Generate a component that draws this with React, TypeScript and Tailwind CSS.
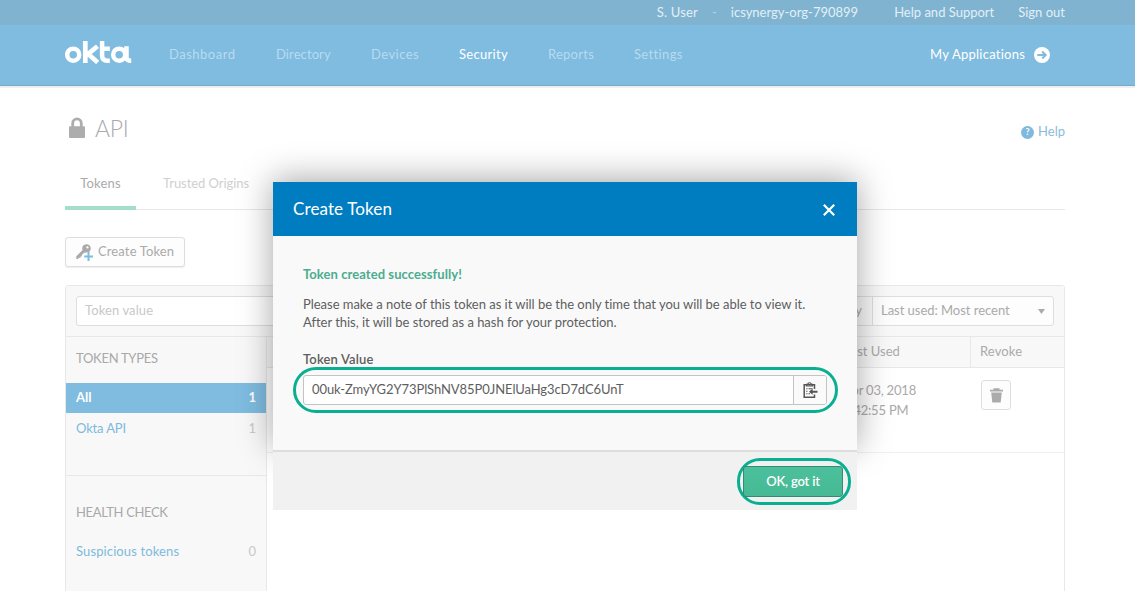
import React from "react";

const OktaLogo = () => (
  <svg className="mt-[16px] h-[23px] w-[67px] shrink-0" viewBox="0 0 67 23" fill="none" stroke="#fff" strokeWidth="4.500">
    <circle cx="8.200" cy="13.700" r="6" />
    <path d="M20.300 0v22M32.500 5.300L22.600 13.400M22.300 12.200l10.400 9.200" strokeWidth="4.700" />
    <path d="M37.100 0v14.400c0 3.600 1.800 5.300 5.500 5.300h2.200M37.300 7.700h7.500" />
    <circle cx="54.200" cy="13.700" r="6" />
    <path d="M61.500 5.300v10.900c0 2.400 1.200 3.500 4.700 3.500" />
  </svg>
);

const LockIcon = () => (
  <svg className="h-[21px] w-[16px]" viewBox="0 0 16 21">
    <path d="M3.700 11V6.200a4.300 4.300 0 0 1 8.600 0V11" fill="none" stroke="#adadad" strokeWidth="2.800" />
    <rect y="9.300" width="16" height="11.700" rx="1" fill="#adadad" />
  </svg>
);

const KeyIcon = () => (
  <svg className="h-[17px] w-[18px]" viewBox="0 0 18 17">
    <path fillRule="evenodd" d="M6.400 3.200C7.200.8 9.400 0 11.300.3c2.100.3 3.500 2.100 3.500 4.100 0 2.500-2 4.500-4.400 4.400-.8 0-1.300-.1-1.900-.4L5.800 10.900l.1 1.300-1.300.2-.2 1.300-1.500.1-.9 1.100H.3v-2.600l6.300-6.200c-.4-1-.5-2-.2-2.900zM11.400 2.200a1.200 1.200 0 1 0 .1 2.400 1.200 1.200 0 0 0-.1-2.400z" fill="#a9a9a9" />
    <path d="M12.500 8v9M8 12.500h9" stroke="#fdfdfd" strokeWidth="4" />
    <path d="M12.500 8v9M8.200 12.500h8.800" stroke="#7fbddf" strokeWidth="2" />
  </svg>
);

const ClipboardIcon = () => (
  <svg className="h-[17px] w-[15px]" viewBox="0 0 15 17" fill="none" stroke="#555" strokeWidth="1.500">
    <path d="M11.500 7V2.800H1.200v12.400h10.300v-2.700" />
    <path d="M3.500 4h6V2.300H8.200C8.200.2 4.800.2 4.800 2.300H3.500z" strokeWidth="1.200" />
    <path d="M3.200 6.700h1.300M5.500 6.700h4M3.200 9.200h1.300M3.200 11.700h1.300M5.500 11.700h1.500" strokeWidth="1.100" />
    <path d="M7 9.700h7.500" strokeWidth="1.900" />
    <path d="M9.600 6.700v6L6 9.700z" fill="#555" stroke="none" />
  </svg>
);

const TrashIcon = () => (
  <svg className="h-[15px] w-[13px]" viewBox="0 0 13 15" fill="#ababab">
    <path d="M0 1.700h3.500V.3h6v1.400H13v1.800H0zM1.200 4.600h10.600l-1.100 9.900H2.300z" />
  </svg>
);

const ArrowCircle = () => (
  <svg className="h-4 w-4" viewBox="0 0 16 16">
    <circle cx="8" cy="8" r="8" fill="#fff" />
    <path d="M3.300 8h8M8.200 4.500L11.700 8l-3.500 3.500" fill="none" stroke="#7fbce0" strokeWidth="2" />
  </svg>
);

const nav: [string, string][] = [
  ["Dashboard", "w-[107px] tracking-[0.5px] text-[#b8dbef]"],
  ["Directory", "w-[95px] tracking-[0.1px] text-[#b8dbef]"],
  ["Devices", "w-[88px] tracking-[0.45px] text-[#b8dbef]"],
  ["Security", "w-[89px] tracking-[0.3px] text-white"],
  ["Reports", "w-[86px] tracking-[0.25px] text-[#b8dbef]"],
  ["Settings", "w-[90px] tracking-[0.35px] text-[#b8dbef]"],
];

function Header() {
  return (
    <header>
      <div className="h-[25px] bg-[#7fb3d0]">
        <div className="ml-[65px] flex w-[1000px] justify-end text-[13px] leading-[24px] text-[#e3eff6]">
          <span className="tracking-[0.2px]">S. User</span>
          <span className="mx-[14px] text-[#b5d3e4]">-</span>
          <span>icsynergy-org-790899</span>
          <span className="ml-9">Help and Support</span>
          <span className="ml-6">Sign out</span>
        </div>
      </div>
      <div className="h-[61px] border-b border-[#79abc8] bg-[#7fbce0]">
        <div className="ml-[65px] flex w-[1000px]">
          <OktaLogo />
          <nav className="ml-[37px] flex text-[13px] leading-[59px]">
            {nav.map(([label, cls]) => (
              <span key={label} className={cls}>{label}</span>
            ))}
          </nav>
          <div className="mr-[15px] ml-auto flex items-center gap-[9px] text-[13px] leading-[59px] tracking-[0.24px] text-white">
            My Applications <ArrowCircle />
          </div>
        </div>
      </div>
      <div className="h-[2px] bg-[#f0f0f0]" />
    </header>
  );
}

function Sidebar() {
  return (
    <aside className="w-[201px] border-r border-[#e8e8e8] bg-[#f8f8f8] text-[13px]">
      <div className="h-[46px] pl-[10px] leading-[43px] tracking-[-0.28px] text-[#a9a9a9]">TOKEN TYPES</div>
      <div className="flex h-[30px] justify-between bg-[#7fbce0] px-[10px] leading-[29px] font-bold text-white">
        <span>All</span><span>1</span>
      </div>
      <div className="flex h-[63px] justify-between border-b border-[#e8e8e8] px-[10px] leading-[31px] text-[#7fb9dc]">
        <span className="tracking-[-0.15px]">Okta API</span><span className="text-[#c8c8c8]">1</span>
      </div>
      <div className="h-[59px] pt-[20px] pl-[10px] leading-[32px] tracking-[-0.35px] text-[#a9a9a9]">HEALTH CHECK</div>
      <div className="flex justify-between px-[10px] leading-[33px] text-[#7fb9dc]">
        <span className="tracking-[0.12px]">Suspicious tokens</span><span className="text-[#c8c8c8]">0</span>
      </div>
    </aside>
  );
}

function Dialog() {
  return (
    <div className="absolute top-[182px] left-[273px] w-[584px] text-[13px] text-[#5e5e5e]">
      <div className="h-[268px] bg-[#f9f9f9] shadow-[0_-2px_32px_rgba(0,0,0,0.36)]">
        <div className="flex h-[54px] items-center justify-between bg-[#007dc1] pr-[22px] pl-5 text-[17px] text-white">
          <span className="-mt-px tracking-[0.12px]">Create Token</span>
          <svg className="mt-[2px] h-3 w-3" viewBox="0 0 12 12" stroke="#fff" strokeWidth="2.200">
            <path d="M.8.800l10.400 10.400M11.200.800L.8 11.200" />
          </svg>
        </div>
        <div className="px-[30px] pt-[29px]">
          <p className="leading-[18px] font-bold tracking-[0.07px] text-[#4cac8f]">Token created successfully!</p>
          <p className="mt-3 leading-[18px] tracking-[-0.03px] whitespace-nowrap">
            Please make a note of this token as it will be the only time that you will be able to view it.<br />
            After this, it will be stored as a hash for your protection.
          </p>
          <p className="mt-[18px] leading-[20px] font-semibold tracking-[0.15px]">Token Value</p>
        </div>
        <div className="-mt-[2px] ml-[20px] flex h-[46px] w-[545px] items-center rounded-[23px] border-[3px] border-[#0aae90] pl-[7px]">
          <div className="flex h-[30px] w-[524px] overflow-hidden rounded-[3px] border border-[#c3c3c3] bg-white leading-[27px]">
            <span className="w-[490px] border-r border-[#c3c3c3] pl-2 tracking-[-0.07px]">00uk-ZmyYG2Y73PlShNV85P0JNElUaHg3cD7dC6UnT</span>
            <span className="flex flex-1 items-center justify-center bg-[#fafafa]"><ClipboardIcon /></span>
          </div>
        </div>
      </div>
      <div className="relative flex h-[60px] justify-end border-t-2 border-[#dddddd] bg-[#f1f1f1] pt-[6px] pr-[6px]">
        <div className="flex h-[47px] w-[114px] items-center rounded-[23px] border-[3px] border-[#0aae90] pl-[3px]">
          <button className="h-[31px] w-[100px] shrink-0 rounded-[3px] border border-[#348c70] bg-linear-to-b from-[#4cbf9c] to-[#46b994] text-[13px] font-semibold tracking-[-0.2px] text-white">OK, got it</button>
        </div>
      </div>
    </div>
  );
}

export default function App() {
  return (
    <div className="relative h-[591px] w-[1135px] overflow-hidden bg-white font-[Lato,sans-serif] text-[#aaaaaa] [font-variant-ligatures:none]">
      <Header />
      <main className="ml-[65px] w-[1000px] text-[13px]">
        <div className="flex h-[77px] justify-between">
          <div className="flex pt-[29px] pl-1">
            <LockIcon />
            <h1 className="-mt-px ml-[10px] text-[23px] leading-[24px] font-light tracking-[-0.3px]">API</h1>
          </div>
          <div className="mt-[36px] flex h-[16px] items-center gap-1 text-[#8cbbd8]">
            <span className="flex h-[13px] w-[13px] items-center justify-center rounded-full bg-[#7fb9dc] text-[9px] font-bold text-white">?</span>
            <span>Help</span>
          </div>
        </div>
        <div className="flex h-[45px] border-b border-[#e7e7e7] leading-[37px]">
          <span className="h-[45px] w-[71px] border-b-4 border-[#a3decb] text-center tracking-[0.15px]">Tokens</span>
          <span className="ml-[27px] tracking-[-0.05px] text-[#d0d0d0]">Trusted Origins</span>
        </div>
        <div className="mt-[27px] flex h-[30px] w-[120px] items-center rounded-[3px] border border-[#dedede] bg-[#fdfdfd] pl-[10px] shadow-[0_1px_1px_#eeeeee]">
          <KeyIcon /><span className="ml-1 tracking-[0.13px]">Create Token</span>
        </div>
        <div className="mt-[18px] h-[320px] rounded-t-[3px] border border-[#e8e8e8]">
          <div className="flex h-[51px] items-center justify-between border-b border-[#e8e8e8] bg-[#f8f8f8] px-[10px]">
            <div className="h-[30px] w-[500px] rounded-[3px] border border-[#dedede] bg-white pl-2 leading-[27px] tracking-[0.1px] text-[#c8c8c8]">Token value</div>
            <div className="flex h-[30px] rounded-[3px] border border-[#dedede] bg-[#fdfdfd] leading-[27px]">
              <span className="border-r border-[#dedede] bg-[#f8f8f8] px-[10px]">Sort by</span>
              <span className="flex w-[180px] items-center justify-between px-2">
                <span className="-mt-px tracking-[-0.03px]">Last used: Most recent</span>
                <svg className="h-[5px] w-[7px]" viewBox="0 0 7 5"><path d="M0 0h7L3.500 5z" fill="#aaa" /></svg>
              </span>
            </div>
          </div>
          <div className="flex h-[300px]">
            <Sidebar />
            <div className="flex-1">
              <div className="flex h-[31px] justify-end border-b border-[#e8e8e8] bg-[#f8f8f8] leading-[29px]">
                <span className="w-[126px]">Last Used</span>
                <span className="w-[94px] border-l border-[#e8e8e8] pl-[9px] tracking-[0.12px]">Revoke</span>
              </div>
              <div className="flex h-[85px] justify-end border-b border-[#f0f0f0]">
                <div className="w-[140px] pt-[12px] pl-[6px] leading-[20px] tracking-[-0.2px]">Apr 03, 2018<br />4:42:55 PM</div>
                <div className="mt-[12px] mr-[53px] ml-[4px] flex h-[30px] w-[30px] items-center justify-center rounded-[3px] border border-[#dedede] bg-[#fdfdfd]">
                  <TrashIcon />
                </div>
              </div>
            </div>
          </div>
        </div>
      </main>
      <Dialog />
    </div>
  );
}
